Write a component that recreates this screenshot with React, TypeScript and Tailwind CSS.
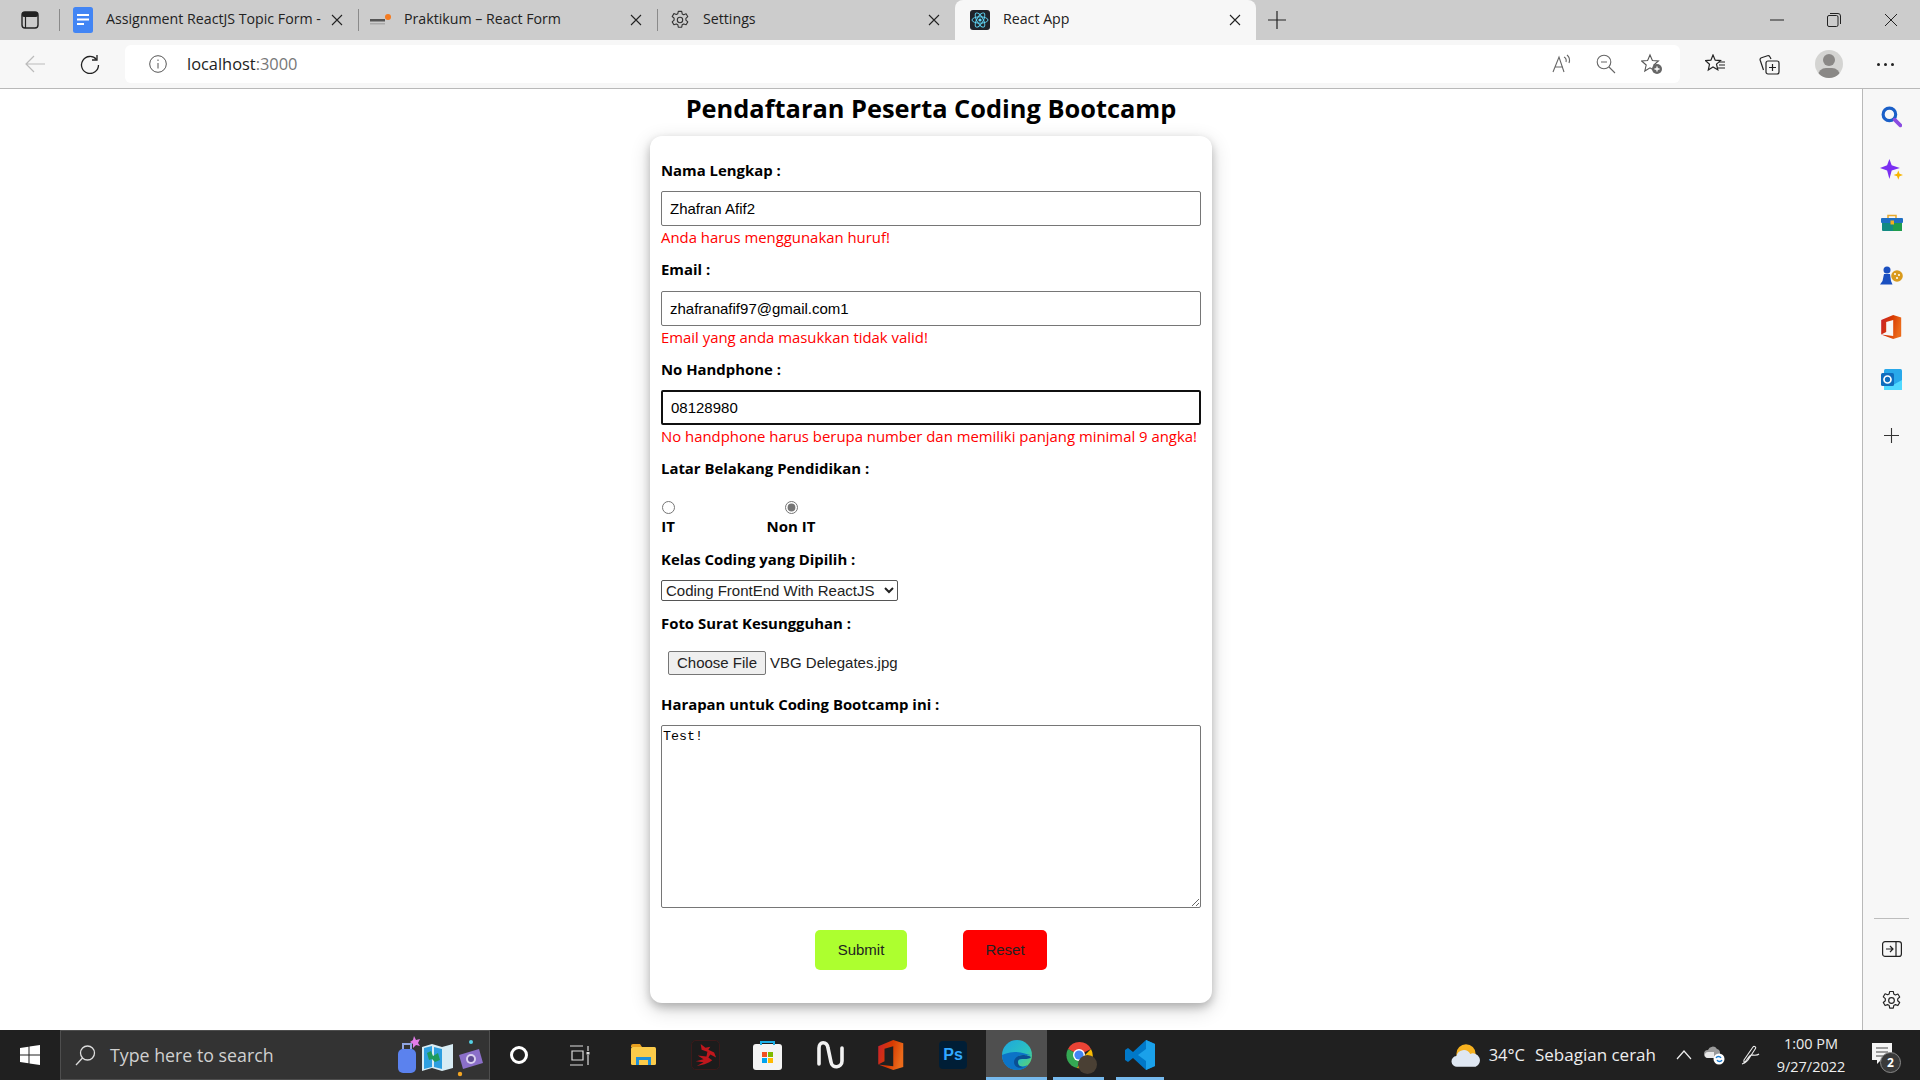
import React from "react";

const ui = "font-['Open_Sans','Noto_Sans',sans-serif]";

function X({ className = "" }: { className?: string }) {
  return (
    <svg width="12" height="12" viewBox="0 0 12 12" className={className} fill="none" stroke="#222" strokeWidth="1.1">
      <path d="M1 1l10 10M11 1L1 11" />
    </svg>
  );
}

function Gear({ size = 20, color = "#333" }: { size?: number; color?: string }) {
  return (
    <svg width={size} height={size} viewBox="0 0 20 20" fill="none" stroke={color} strokeWidth="1.1" strokeLinejoin="round">
      <path d="M8.3 1.4h3.4l.5 2.5 1.5.8 2.4-.9 1.7 2.9-1.9 1.7v1.8l1.9 1.7-1.7 2.9-2.4-.9-1.5.8-.5 2.5H8.3l-.5-2.5-1.5-.8-2.4.9-1.7-2.9 1.9-1.7V8.2L2.2 6.5l1.7-2.9 2.4.9 1.5-.8z" />
      <circle cx="10" cy="10" r="2.7" />
    </svg>
  );
}

function Tab({ w, icon, title, active, closeGap }: { w: string; icon: React.ReactNode; title: string; active?: boolean; closeGap: string }) {
  return (
    <div className={`${w} h-full flex items-center shrink-0 ${active ? "bg-[#f7f7f7] rounded-t-[8px]" : ""}`}>
      <div className={`${closeGap} flex items-center min-w-0 flex-1`}>
        <div className="w-[22px] h-[22px] flex items-center justify-center shrink-0">{icon}</div>
        <span className={`${ui} ml-[12px] mb-[2px] text-[14.2px] leading-[20px] text-[#222] whitespace-nowrap overflow-hidden`}>{title}</span>
      </div>
      <X className="mr-[15px] ml-[6px] shrink-0" />
    </div>
  );
}

function Sep() {
  return <div className="w-px h-[22px] bg-[#8a8a8a] shrink-0" />;
}

function TabBar() {
  return (
    <div className="h-[40px] bg-[#cccccc] flex items-center shrink-0">
      <div className="w-[59px] flex items-center justify-center">
        <svg width="18" height="18" viewBox="0 0 18 18">
          <rect x="1" y="1" width="16" height="16" rx="3" fill="none" stroke="#222" strokeWidth="1.4" />
          <rect x="1" y="1" width="16" height="5" rx="2" fill="#222" />
          <path d="M4.5 6v11" stroke="#222" strokeWidth="1.2" />
        </svg>
      </div>
      <Sep />
      <Tab
        w="w-[298px]"
        closeGap="pl-[12px]"
        title="Assignment ReactJS Topic Form -"
        icon={
          <svg width="20" height="26" viewBox="0 0 20 26">
            <rect width="20" height="26" rx="2.5" fill="#4285f4" />
            <path d="M4 8h12M4 12.500h12M4 17h7" stroke="#fff" strokeWidth="2" />
          </svg>
        }
      />
      <Sep />
      <Tab
        w="w-[298px]"
        closeGap="pl-[11px]"
        title="Praktikum – React Form"
        icon={
          <svg width="22" height="14" viewBox="0 0 22 14">
            <rect x="0" y="6" width="15" height="2.500" fill="#555" />
            <rect x="0" y="10" width="15" height="1.500" fill="#aaa" />
            <circle cx="18" cy="4" r="3" fill="#f47b20" />
          </svg>
        }
      />
      <Sep />
      <Tab w="w-[297px]" closeGap="pl-[11px]" title="Settings" icon={<Gear />} />
      <Tab
        active
        w="w-[301px]"
        closeGap="pl-[14px]"
        title="React App"
        icon={
          <svg width="20" height="20" viewBox="0 0 20 20">
            <rect width="20" height="20" rx="3" fill="#20232a" />
            <g fill="none" stroke="#61dafb" strokeWidth="0.9">
              <ellipse cx="10" cy="10" rx="8" ry="3.200" />
              <ellipse cx="10" cy="10" rx="8" ry="3.200" transform="rotate(60 10 10)" />
              <ellipse cx="10" cy="10" rx="8" ry="3.200" transform="rotate(120 10 10)" />
            </g>
            <circle cx="10" cy="10" r="1.600" fill="#61dafb" />
          </svg>
        }
      />
      <div className="ml-[12px] w-[18px] flex justify-center">
        <svg width="18" height="18" viewBox="0 0 18 18" stroke="#222" strokeWidth="1.2">
          <path d="M9 0v18M0 9h18" />
        </svg>
      </div>
      <div className="ml-auto flex items-center pr-[22px] gap-[43px]">
        <svg width="14" height="14" viewBox="0 0 14 14" stroke="#222" strokeWidth="1"><path d="M0 7h14" /></svg>
        <svg width="14" height="14" viewBox="0 0 14 14" fill="none" stroke="#222" strokeWidth="1">
          <rect x="0.500" y="2.500" width="10.500" height="11" rx="1.500" />
          <path d="M3 .5h8a2.500 2.500 0 0 1 2.500 2.500v8" />
        </svg>
        <svg width="14" height="14" viewBox="0 0 14 14" stroke="#222" strokeWidth="1"><path d="M1 1l12 12M13 1L1 13" /></svg>
      </div>
    </div>
  );
}

function ToolBar() {
  return (
    <div className="h-[49px] bg-[#f7f7f7] border-b border-[#b9b9b9] flex items-start pt-[5px] shrink-0">
      <div className="w-[125px] h-[38px] flex items-center shrink-0">
        <svg className="ml-[25px]" width="20" height="18" viewBox="0 0 20 18" fill="none" stroke="#bbb" strokeWidth="1.200"><path d="M20 9H1M9 1L1 9l8 8" /></svg>
        <svg className="ml-[35px]" width="20" height="20" viewBox="0 0 20 20" fill="none" stroke="#222" strokeWidth="1.300">
          <path d="M16.500 5.500A8.500 8.500 0 1 0 18.500 11" />
          <path d="M17 1v5h-5" />
        </svg>
      </div>
      <div className="w-[1555px] h-[38px] bg-white rounded-[6px] flex items-center shrink-0">
        <svg className="ml-[24px]" width="18" height="18" viewBox="0 0 18 18" fill="none" stroke="#555" strokeWidth="1">
          <circle cx="9" cy="9" r="8.300" />
          <path d="M9 8v5.500M9 4.500v1.500" />
        </svg>
        <span className={`${ui} ml-[20px] text-[16.4px] text-[#222]`}>
          localhost<span className="text-[#777]">:3000</span>
        </span>
        <div className="ml-auto flex items-center">
          <span className="relative w-[20px] h-[20px] flex items-center justify-center">
            <svg width="20" height="20" viewBox="0 0 20 20" fill="none" stroke="#666" strokeWidth="1.100">
              <path d="M1 18L7 3l5 15M3 13h8M12 3c2 1 2.500 3 2 5M15 1c2.500 2 3 5 2 8" />
            </svg>
          </span>
          <svg className="ml-[24px]" width="20" height="20" viewBox="0 0 20 20" fill="none" stroke="#666" strokeWidth="1.100">
            <circle cx="8" cy="8" r="6.800" />
            <path d="M5 8h6M13 13l6 6" />
          </svg>
          <svg className="ml-[25px]" width="22" height="22" viewBox="0 0 22 22">
            <path d="M9 2l2.400 5.500 6 .5-4.600 4 1.400 6-5.200-3.200L3.800 18l1.400-6L.6 8l6-.5z" fill="none" stroke="#555" strokeWidth="1.100" />
            <circle cx="16" cy="16" r="5" fill="#666" />
            <path d="M16 13.500v5M13.500 16h5" stroke="#fff" strokeWidth="1.300" />
          </svg>
          <div className="w-[17px]" />
        </div>
      </div>
      <div className="flex-1 h-[38px] flex items-center">
        <svg className="ml-[25px]" width="21" height="20" viewBox="0 0 21 20" fill="none" stroke="#222" strokeWidth="1.200">
          <path d="M8 1l2.200 5.200 5.300.4-4 3.500 1.300 5.600L8 13l-4.700 3 1.200-5.700L.5 6.600l5.400-.4z" />
          <path d="M14 8h6M14 11h6M13 14h7" />
        </svg>
        <svg className="ml-[33px]" width="21" height="21" viewBox="0 0 21 21" fill="none" stroke="#222" strokeWidth="1.200">
          <rect x="7" y="7" width="13" height="13" rx="2" />
          <path d="M13.500 10v7M10 13.500h7" />
          <path d="M4.500 16L1.200 6.300a2 2 0 0 1 1.300-2.500l6-2a2 2 0 0 1 2.500 1.200L12 5" />
        </svg>
        <div className="ml-[35px] w-[28px] h-[28px] rounded-full bg-[#d4d4d2] relative overflow-hidden">
          <div className="absolute left-[8px] top-[4px] w-[12px] h-[12px] rounded-full bg-[#8a8886]" />
          <div className="absolute left-[3px] top-[18px] w-[22px] h-[16px] rounded-full bg-[#8a8886]" />
        </div>
        <div className="ml-[34px] flex gap-[4px]">
          <span className="w-[3px] h-[3px] rounded-full bg-[#222]" />
          <span className="w-[3px] h-[3px] rounded-full bg-[#222]" />
          <span className="w-[3px] h-[3px] rounded-full bg-[#222]" />
        </div>
      </div>
    </div>
  );
}

function Label({ children, className = "" }: { children: React.ReactNode; className?: string }) {
  return <label className={`block text-[14.9px] leading-[21px] font-bold text-black ${className}`}>{children}</label>;
}

function Field({ label, value, error, focus, top, gap }: { label: string; value: string; error: string; focus?: boolean; top: string; gap: string }) {
  return (
    <div className={top}>
      <Label>{label}</Label>
      <input
        readOnly
        value={value}
        className={`${gap} block w-full h-[35px] px-[8px] rounded-[2px] bg-white font-['Liberation_Sans',sans-serif] text-[15px] text-black outline-none ${focus ? "border-2 border-[#101010] px-[7px]" : "border border-[#767676]"}`}
      />
      <div className="h-[22px] text-[14.9px] leading-[22px] text-[#ff0000]">{error}</div>
    </div>
  );
}

function Card() {
  return (
    <form className={`${ui} w-[562px] h-[867px] mt-[10px] bg-white rounded-[12px] px-[11px] pt-[24px] shadow-[0_4px_8px_rgba(0,0,0,0.2),0_6px_20px_rgba(0,0,0,0.19)]`}>
      <Field label="Nama Lengkap :" value="Zhafran Afif2" error="Anda harus menggunakan huruf!" top="" gap="mt-[10px]" />
      <Field label="Email :" value="zhafranafif97@gmail.com1" error="Email yang anda masukkan tidak valid!" top="mt-[11px]" gap="mt-[11px]" />
      <Field label="No Handphone :" value="08128980" error="No handphone harus berupa number dan memiliki panjang minimal 9 angka!" focus top="mt-[11px]" gap="mt-[10px]" />
      <Label className="mt-[11px]">Latar Belakang Pendidikan :</Label>
      <div className="mt-[22px] flex">
        <div className="flex flex-col items-center w-[14px]">
          <input type="radio" readOnly name="bg" className="m-0 w-[13px] h-[13px] accent-[#757575]" />
          <span className="mt-[2px] text-[15px] leading-[21px] font-bold">IT</span>
        </div>
        <div className="ml-[91px] flex flex-col items-center w-[50px]">
          <input type="radio" readOnly checked name="bg2" className="m-0 w-[13px] h-[13px] accent-[#757575]" />
          <span className="mt-[2px] text-[15px] leading-[21px] font-bold whitespace-nowrap">Non IT</span>
        </div>
      </div>
      <Label className="mt-[12px]">Kelas Coding yang Dipilih :</Label>
      <select defaultValue="a" className="mt-[10px] block w-[237px] h-[21px] bg-white border border-[#555] rounded-[2px] font-['Liberation_Sans',sans-serif] text-[15px] text-[#222]">
        <option value="a">Coding FrontEnd With ReactJS</option>
      </select>
      <Label className="mt-[12px]">Foto Surat Kesungguhan :</Label>
      <div className="mt-[17px] ml-[7px] flex items-center h-[24px] font-['Liberation_Sans',sans-serif] text-[15px] text-[#222]">
        <button type="button" className="w-[98px] h-[24px] bg-[#efefef] border border-[#767676] rounded-[2px] text-[15px]">Choose File</button>
        <span className="ml-[4px]">VBG Delegates.jpg</span>
      </div>
      <Label className="mt-[19px]">Harapan untuk Coding Bootcamp ini :</Label>
      <textarea
        readOnly
        value="Test!"
        className="mt-[10px] block w-full h-[183px] bg-white border border-[#767676] rounded-[2px] px-[1px] py-[3px] font-['Liberation_Mono',monospace] text-[13.33px] leading-[15px] text-black resize outline-none"
      />
      <div className="mt-[22px] flex">
        <button type="button" className="ml-[154px] w-[92px] h-[40px] rounded-[5px] bg-[#adff2f] font-['Liberation_Sans',sans-serif] text-[15px] text-[#222]">Submit</button>
        <button type="button" className="ml-[56px] w-[84px] h-[40px] rounded-[5px] bg-[#ff0000] font-['Liberation_Sans',sans-serif] text-[15px] text-[#222]">Reset</button>
      </div>
    </form>
  );
}

function SideIcon({ children, h = "h-[53px]" }: { children: React.ReactNode; h?: string }) {
  return <div className={`${h} flex items-center justify-center`}>{children}</div>;
}

function OfficeLogo({ size = 22, id }: { size?: number; id: string }) {
  return (
    <svg width={size * 0.85} height={size} viewBox="0 0 20 24">
      <defs>
        <linearGradient id={id} x1="0" x2="1" y1="0" y2="0.300">
          <stop offset="0" stopColor="#c8202f" />
          <stop offset="0.550" stopColor="#d83b01" />
          <stop offset="1" stopColor="#eb6a1a" />
        </linearGradient>
      </defs>
      <path d="M0 5L12 0l8 2.500v19L12 24 0 19.500l12 1.500V5L5 7v10l-5 2.500z" fill={`url(#${id})`} />
    </svg>
  );
}

function SidePanel() {
  return (
    <aside className="w-[58px] shrink-0 bg-[#f7f7f7] border-l border-[#b9b9b9] flex flex-col pt-[1px]">
      <SideIcon>
        <svg width="21" height="22" viewBox="0 0 20 21" fill="none">
          <circle cx="8" cy="8" r="6" stroke="#1a5fc8" strokeWidth="3" />
          <path d="M13 13l5.500 5.500" stroke="#8a4be0" strokeWidth="3.500" strokeLinecap="round" />
        </svg>
      </SideIcon>
      <SideIcon>
        <svg width="23" height="23" viewBox="0 0 22 22">
          <path d="M9 1l2.200 6L19 9.500 11.200 12 9 20 6.800 12 0 9.500 6.800 7z" fill="#7b2ff2" />
          <path d="M17.500 12l1.200 3 3.300 1.200-3.300 1.200-1.200 3.300-1.200-3.300-3.300-1.200 3.300-1.200z" fill="#f7b500" />
        </svg>
      </SideIcon>
      <SideIcon>
        <svg width="22" height="17" viewBox="0 0 22 17">
          <path d="M7 4V1.500h8V4" fill="none" stroke="#e8a92b" strokeWidth="1.500" />
          <rect x="1" y="8" width="20" height="9" rx="1" fill="#138a82" />
          <rect x="12" y="9" width="9" height="8" fill="#1f9d4d" />
          <rect x="0" y="4" width="22" height="5" rx="1" fill="#1f6fc4" />
          <rect x="9.500" y="6.500" width="3.500" height="4" fill="#f2b01e" />
        </svg>
      </SideIcon>
      <SideIcon h="h-[52px]">
        <svg width="23" height="19" viewBox="0 0 23 19">
          <circle cx="17" cy="10" r="5.800" fill="#d99a1c" />
          <circle cx="15" cy="8" r="1" fill="#fff" />
          <circle cx="19" cy="9" r="1" fill="#fff" />
          <circle cx="17" cy="12" r="1" fill="#fff" />
          <circle cx="7" cy="4" r="3.500" fill="#1a4fc0" />
          <path d="M4 8h6l1 7 1.500 3.500H0L2.500 15z" fill="#1a4fc0" />
        </svg>
      </SideIcon>
      <SideIcon h="h-[52px]"><OfficeLogo size={24} id="ofc1" /></SideIcon>
      <SideIcon h="h-[52px]">
        <svg width="21" height="21" viewBox="0 0 21 21">
          <rect x="3" y="0" width="18" height="21" rx="1.500" fill="#28a8ea" />
          <path d="M3 11l9 5 9-5v10H3z" fill="#50d9ff" />
          <rect x="0" y="4" width="13" height="13" rx="1.500" fill="#0f6cbd" />
          <circle cx="6.500" cy="10.500" r="3.500" fill="none" stroke="#fff" strokeWidth="1.700" />
        </svg>
      </SideIcon>
      <div className="h-[55px] flex items-center justify-center pt-[6px]">
        <svg width="15" height="15" viewBox="0 0 15 15" stroke="#333" strokeWidth="1.100"><path d="M7.500 0v15M0 7.500h15" /></svg>
      </div>
      <div className="mt-auto flex flex-col items-center pb-[19px]">
        <div className="w-[35px] h-px bg-[#bdbdbd] mb-[22px]" />
        <svg width="20" height="16" viewBox="0 0 20 16" fill="none" stroke="#222" strokeWidth="1.200">
          <rect x="0.600" y="0.600" width="18.800" height="14.800" rx="2.500" />
          <path d="M14 .6v14.800M4 8h7M8 5l3 3-3 3" />
        </svg>
        <div className="mt-[33px]"><Gear size={21} color="#222" /></div>
      </div>
    </aside>
  );
}

function TB({ w, children, active, line }: { w: string; children: React.ReactNode; active?: boolean; line?: boolean }) {
  return (
    <div className={`${w} h-full shrink-0 relative flex items-center justify-center ${active ? "bg-[#4f4f4f]" : ""}`}>
      {children}
      {line && <div className={`absolute bottom-0 h-[3px] bg-[#76b9ed] ${active ? "left-0 right-0" : "left-[6px] right-[6px]"}`} />}
    </div>
  );
}

function TaskBar() {
  return (
    <div className="h-[50px] bg-[#202020] flex items-center shrink-0">
      <div className="w-[60px] h-full flex items-center justify-center">
        <svg width="20" height="20" viewBox="0 0 20 20" fill="#fff">
          <path d="M0 3l8.500-1.200v7.700H0zM9.500 1.600L20 0v9.500H9.500zM0 10.500h8.500v7.700L0 17zM9.500 10.500H20V20L9.500 18.400z" />
        </svg>
      </div>
      <div className="w-[430px] h-full bg-[#333333] border border-[#5a5a5a]/70 flex items-center shrink-0">
        <svg className="ml-[14px]" width="21" height="21" viewBox="0 0 21 21" fill="none" stroke="#ddd" strokeWidth="1.300">
          <circle cx="12.500" cy="8" r="7" />
          <path d="M7.500 13L1 20" />
        </svg>
        <span className={`${ui} ml-[14px] text-[17.8px] text-[#d0d0d0]`}>Type here to search</span>
        <svg className="ml-auto mr-[6px]" width="88" height="44" viewBox="0 0 88 44">
          <path d="M19 3l2 4 4-1-2 4 2 3-4-1-3 3 0-4-3-2 3-2z" fill="#e27ce8" />
          <circle cx="76" cy="9" r="2" fill="#55d1e6" />
          <circle cx="65" cy="41" r="2.200" fill="#f5a623" />
          <rect x="3" y="16" width="18" height="24" rx="5" fill="#5b82ee" />
          <path d="M8 16v-5h8v5" fill="none" stroke="#8fa4e0" strokeWidth="2" />
          <path d="M27 14l10-3 10 3 11-3v24l-11 3-10-3-10 3z" fill="#d8ecf4" />
          <path d="M29 15l8-2v21l-8 2zM39 14l8 2v20l-8-2z" fill="#2e9fe0" />
          <path d="M32 20l4-2 2 5 5-3 2 7-5 2-3-3-3 1z" fill="#1e9b5d" />
          <path d="M64 22l20-6 4 14-20 6z" fill="#8b6fc9" />
          <circle cx="76" cy="26" r="5" fill="#d9d0ef" />
          <circle cx="76" cy="26" r="3" fill="#5e4a92" />
        </svg>
      </div>
      <TB w="w-[58px]">
        <div className="w-[18px] h-[18px] rounded-full border-[3px] border-white" />
      </TB>
      <TB w="w-[64px]">
        <svg width="22" height="21" viewBox="0 0 22 21" fill="none" stroke="#ddd" strokeWidth="1.200">
          <path d="M1 1h13M1 20h13M3 6h11v9H3zM19 1v5M19 10v10" />
          <rect x="17.500" y="7" width="3" height="2.500" fill="#ddd" stroke="none" />
        </svg>
      </TB>
      <TB w="w-[62px]">
        <svg width="25" height="22" viewBox="0 0 25 22">
          <path d="M0 2a2 2 0 0 1 2-2h7l2 3H0z" fill="#e8a020" />
          <rect x="0" y="3" width="25" height="18" rx="1.500" fill="#fbcb4a" />
          <path d="M5 13h15v8h-3v-5H8v5H5z" fill="#1e8fd8" />
        </svg>
      </TB>
      <TB w="w-[62px]">
        <div className="w-[29px] h-[30px] rounded-[5px] bg-[#1c1c1c] border border-[#3b1a1a] flex items-center justify-center">
          <svg width="26" height="27" viewBox="0 0 25 28" fill="#c1171d">
            <path d="M8 2l5 4 5-1-2 3 6 3 2 5-6-3-2 3 4 3-3 2-5 2-8 2 7-4-8-1 8-2-6-4 9 1 1-5-6-2z" />
          </svg>
        </div>
      </TB>
      <TB w="w-[62px]">
        <svg width="29" height="30" viewBox="0 0 29 30">
          <rect x="0" y="4" width="29" height="26" rx="3" fill="#f4f4f4" />
          <path d="M8 5V2h13v3" fill="none" stroke="#1db0e8" strokeWidth="2" />
          <rect x="9" y="12" width="5" height="5" fill="#f25022" />
          <rect x="15" y="12" width="5" height="5" fill="#7fba00" />
          <rect x="9" y="18" width="5" height="5" fill="#00a4ef" />
          <rect x="15" y="18" width="5" height="5" fill="#ffb900" />
        </svg>
      </TB>
      <TB w="w-[64px]">
        <svg width="27" height="30" viewBox="0 0 27 30" fill="none" stroke="#f2f2f2" strokeWidth="3.600" strokeLinecap="round">
          <path d="M2 24V8c0-7 8-7 9 0l3 14c1 7 11 6 11-1V8" />
        </svg>
      </TB>
      <TB w="w-[58px]">
        <OfficeLogo size={30} id="ofc2" />
      </TB>
      <TB w="w-[66px]">
        <div className="w-[28px] h-[28px] rounded-[4px] bg-[#001e36] flex items-center justify-center font-['Liberation_Sans',sans-serif] font-bold text-[16px] text-[#31a8ff]">Ps</div>
      </TB>
      <TB w="w-[61px]" active line>
        <svg width="30" height="30" viewBox="0 0 30 30">
          <defs>
            <linearGradient id="edg" x1="0" x2="1" y1="0" y2="1">
              <stop offset="0" stopColor="#1da5e0" />
              <stop offset="0.600" stopColor="#2bc3c0" />
              <stop offset="1" stopColor="#6ed45a" />
            </linearGradient>
          </defs>
          <circle cx="15" cy="15" r="15" fill="url(#edg)" />
          <path d="M0 15c0 9 7 15 15 15 5 0 9-2 11-5-6 3-12 1-12-5 0-3 3-5 7-5 4 0 8 1 9-1C29 17 22 12 13 12 6 12 1 15 0 15z" fill="#0c73c7" />
          <path d="M12 22c0-4 4-7 9-7 3 0 7 1 8 2-1 2-5 2-9 2-3 0-4 1-4 3 0 3 2 5 6 5-5 2-10 0-10-5z" fill="#0a4f94" />
        </svg>
      </TB>
      <TB w="w-[63px]" line>
        <div className="relative w-[30px] h-[30px]">
          <svg width="30" height="30" viewBox="0 0 30 30">
            <path d="M15 15L4 9A13 13 0 0 1 27 9z" fill="#ea4335" />
            <path d="M4 9a13 13 0 0 0 9 19l6-11z" fill="#34a853" />
            <path d="M27 9a13 13 0 0 1-14 19l8-13z" fill="#fbbc04" />
            <circle cx="15" cy="15" r="6" fill="#fff" />
            <circle cx="15" cy="15" r="4.600" fill="#4285f4" />
          </svg>
          <div className="absolute right-[-3px] bottom-[-4px] w-[19px] h-[19px] rounded-full bg-[#4a4034]" />
        </div>
      </TB>
      <TB w="w-[60px]" line>
        <svg width="30" height="30" viewBox="0 0 30 30">
          <path d="M21 0l9 4v22l-9 4L8 18l-5 4-3-2v-10l3-2 5 4z" fill="#0078c8" />
          <path d="M21 0l9 4v22l-9 4V21l-8-6 8-6z" fill="#1aa1ea" />
        </svg>
      </TB>
      <div className="ml-auto flex items-center h-full text-white">
        <svg width="30" height="26" viewBox="0 0 28 24">
          <circle cx="14" cy="11" r="9" fill="#f6b11f" />
          <path d="M6 23a5 5 0 0 1-1-10 7 7 0 0 1 13-2 6 6 0 0 1 5 12z" fill="#dfe7f2" />
        </svg>
        <span className={`${ui} ml-[8px] text-[16.5px] text-[#eee]`}>34°C</span>
        <span className={`${ui} ml-[10px] text-[17px] text-[#eee]`}>Sebagian cerah</span>
        <svg className="ml-[20px]" width="16" height="10" viewBox="0 0 16 10" fill="none" stroke="#eee" strokeWidth="1.200"><path d="M1 9l7-8 7 8" /></svg>
        <svg className="ml-[12px]" width="21" height="20" viewBox="0 0 21 20">
          <path d="M4 13a4 4 0 0 1 0-8 5 5 0 0 1 9-1 4 4 0 0 1 3 4v5z" fill="#9a9a9a" />
          <path d="M1 9a3 3 0 0 0 3 4h6V7H4a3 3 0 0 0-3 2z" fill="#e8e8e8" />
          <circle cx="15" cy="14" r="5.500" fill="#fff" />
          <path d="M12 13c1-2 4-2 5 0M18 15c-1 2-4 2-5 0" stroke="#1f7fd0" fill="none" strokeWidth="1.300" />
        </svg>
        <svg className="ml-[15px]" width="21" height="21" viewBox="0 0 21 21" fill="none" stroke="#eee" strokeWidth="1.100">
          <path d="M4 15L13 2c1-1.500 3.500 0 2.500 1.500L8 15c-1 1.500-3.500 3-3.500 3S3.500 16 4 15zM2 19c4-1 6-8 9-9 3 0 6 1 8-1" />
        </svg>
        <div className={`${ui} ml-[8px] w-[84px] flex flex-col items-center text-[14.5px] leading-[23px] text-[#eee]`}>
          <span>1:00 PM</span>
          <span>9/27/2022</span>
        </div>
        <div className="ml-[19px] mr-[20px] relative w-[28px] h-[32px]">
          <svg width="21" height="21" viewBox="0 0 21 21" className="absolute left-0 top-[4px]">
            <path d="M0 0h20v17H9l-4 4v-4H0z" fill="#f4f4f4" />
            <path d="M4 5h12M4 9h12M4 13h8" stroke="#444" strokeWidth="1.200" />
          </svg>
          <div className={`${ui} absolute right-[-1px] bottom-[-2px] w-[21px] h-[21px] rounded-full bg-[#3a3a3a] border border-[#888] flex items-center justify-center text-[12px] font-bold text-white`}>2</div>
        </div>
      </div>
    </div>
  );
}

export default function App() {
  return (
    <div className="w-[1920px] h-[1080px] flex flex-col overflow-hidden bg-white">
      <TabBar />
      <ToolBar />
      <div className="flex-1 flex min-h-0">
        <main className="flex-1 flex flex-col items-center min-w-0 overflow-hidden">
          <h1 className={`${ui} text-[25.4px] leading-[36px] mt-[1px] font-bold text-black`}>Pendaftaran Peserta Coding Bootcamp</h1>
          <Card />
        </main>
        <SidePanel />
      </div>
      <TaskBar />
    </div>
  );
}
